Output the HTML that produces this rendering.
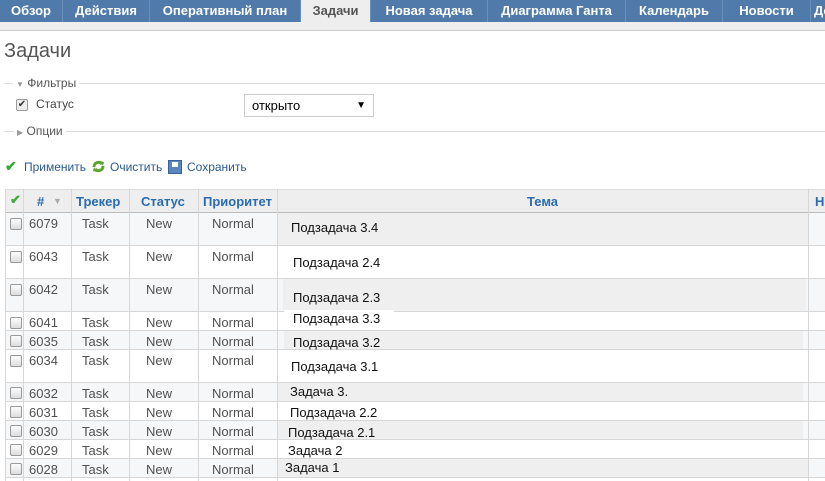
<!DOCTYPE html>
<html><head><meta charset="utf-8">
<style>
*{margin:0;padding:0;box-sizing:border-box}
body{width:825px;height:481px;overflow:hidden;background:#fff;font-family:"Liberation Sans",Arial,sans-serif;position:relative;color:#505050}
.a{position:absolute;white-space:nowrap}
.tab{position:absolute;top:0;height:22px;background:#507aaa;color:#fff;font-weight:bold;font-size:13px;line-height:22px;text-align:center}
.c{position:absolute;font-size:13px;color:#505050;margin-top:1px}
.t{position:absolute;font-size:13px;color:#111}
.cb{position:absolute;left:10px;width:12px;height:12px;border:1px solid #999;border-radius:2px;background:linear-gradient(#fdfdfd,#ddd)}
.vl{position:absolute;width:1px;background:#d7d7d7}
.hl{position:absolute;left:5px;width:820px;height:1px;background:#d7d7d7}
.th{position:absolute;top:194px;font-size:13px;font-weight:bold;color:#2a6bb0}
</style></head><body>
<div class="a" style="left:0;top:0;width:825px;height:22px;background:#6b8fbb"></div>
<div class="a" style="left:0;top:22px;width:825px;height:8px;background:#eee"></div>
<div class="a" style="left:0;top:30px;width:825px;height:1px;background:#ccc"></div>
<div class="tab" style="left:0;width:62px">Обзор</div>
<div class="tab" style="left:63px;width:86px">Действия</div>
<div class="tab" style="left:150px;width:150px">Оперативный план</div>
<div class="tab" style="left:301px;width:69px;background:#eee;color:#555;height:24px">Задачи</div>
<div class="tab" style="left:371px;width:116px">Новая задача</div>
<div class="tab" style="left:488px;width:137px">Диаграмма Ганта</div>
<div class="tab" style="left:626px;width:96px">Календарь</div>
<div class="tab" style="left:723px;width:87px">Новости</div>
<div class="tab" style="left:811px;width:30px;text-align:left;padding-left:3px">До</div>

<div class="a" style="left:4px;top:40px;font-size:20px;color:#555">Задачи</div>

<div class="a" style="left:4px;top:83px;width:821px;height:1px;background:#ddd"></div>
<div class="a" style="left:13px;top:76px;background:#fff;padding:0 3px;font-size:12px;color:#555"><span style="color:#999;font-size:8px">▼</span> Фильтры</div>
<div class="a" style="left:16px;top:99px;width:12px;height:12px;border:1px solid #999;border-radius:2px;background:#eee;font-size:10px;line-height:10px;color:#333;text-align:center">✔</div>
<div class="a" style="left:36px;top:97px;font-size:12px;color:#444">Статус</div>
<div class="a" style="left:244px;top:94px;width:130px;height:23px;border:1px solid #ccc;background:#fff;font-size:13px;color:#000;line-height:21px;padding-left:7px">открыто<span style="position:absolute;right:7px;font-size:10px">▼</span></div>
<div class="a" style="left:4px;top:131px;width:821px;height:1px;background:#ddd"></div>
<div class="a" style="left:14px;top:124px;background:#fff;padding:0 3px;font-size:12px;color:#555"><span style="color:#999;font-size:8px">▶</span> Опции</div>

<div class="a" style="left:5px;top:158px;font-size:14px;color:#3a3;font-weight:bold">✔</div>
<div class="a" style="left:24px;top:160px;font-size:12px;color:#2a5a8a">Применить</div>
<svg class="a" style="left:91px;top:159px" width="15" height="15" viewBox="0 0 15 15"><path d="M3 8a4.5 4.5 0 0 1 8-3" fill="none" stroke="#5aa52e" stroke-width="3"/><path d="M12 7a4.5 4.5 0 0 1-8 3" fill="none" stroke="#5aa52e" stroke-width="3"/><path d="M9 2l4 1-1 4z" fill="#5aa52e"/><path d="M6 13l-4-1 1-4z" fill="#5aa52e"/></svg>
<div class="a" style="left:110px;top:160px;font-size:12px;color:#2a5a8a">Очистить</div>
<div class="a" style="left:168px;top:160px;width:14px;height:14px;background:#5a86c0;border:1px solid #3a5f96"><div style="margin:1px 3px;width:6px;height:5px;background:#fff"></div></div>
<div class="a" style="left:187px;top:160px;font-size:12px;color:#2a5a8a">Сохранить</div>

<div class="a" style="left:5px;top:189px;width:820px;height:23px;background:#eee;border-top:1px solid #ddd"></div>
<div class="a" style="left:5px;top:212px;width:820px;height:1px;background:#bbb"></div>
<div class="a" style="left:10px;top:192px;font-size:13px;color:#4a4;font-weight:bold">✔</div>
<div class="th" style="left:37px">#</div><div class="a" style="left:53px;top:196px;font-size:9px;color:#aaa">▼</div>
<div class="th" style="left:76px">Трекер</div>
<div class="th" style="left:141px">Статус</div>
<div class="th" style="left:203px">Приоритет</div>
<div class="th" style="left:527px">Тема</div>
<div class="th" style="left:815px">Н</div>

<div class="a" style="left:5px;top:213px;width:820px;height:32px;background:#f6f7f9"></div>
<div class="a" style="left:277px;top:213px;width:531px;height:32px;background:#efefef"></div>
<div class="a" style="left:5px;top:279px;width:820px;height:32px;background:#f6f7f9"></div>
<div class="a" style="left:283px;top:279px;width:523px;height:32px;background:#efefef"></div>
<div class="a" style="left:5px;top:331px;width:820px;height:18px;background:#f6f7f9"></div>
<div class="a" style="left:284px;top:331px;width:519px;height:18px;background:#efefef"></div>
<div class="a" style="left:5px;top:383px;width:820px;height:18px;background:#f6f7f9"></div>
<div class="a" style="left:277px;top:383px;width:526px;height:18px;background:#efefef"></div>
<div class="a" style="left:5px;top:421px;width:820px;height:18px;background:#f6f7f9"></div>
<div class="a" style="left:277px;top:421px;width:526px;height:18px;background:#efefef"></div>
<div class="a" style="left:5px;top:459px;width:820px;height:18px;background:#f6f7f9"></div>
<div class="a" style="left:277px;top:459px;width:531px;height:18px;background:#efefef"></div>

<div class="hl" style="top:245px"></div><div class="hl" style="top:278px"></div><div class="hl" style="top:311px"></div><div class="hl" style="top:330px"></div><div class="hl" style="top:349px"></div><div class="hl" style="top:382px"></div><div class="hl" style="top:401px"></div><div class="hl" style="top:420px"></div><div class="hl" style="top:439px"></div><div class="hl" style="top:458px"></div><div class="hl" style="top:477px"></div>
<div class="vl" style="left:5px;top:189px;height:292px"></div>
<div class="vl" style="left:23px;top:189px;height:292px"></div>
<div class="vl" style="left:71px;top:189px;height:292px"></div>
<div class="vl" style="left:129px;top:189px;height:292px"></div>
<div class="vl" style="left:198px;top:189px;height:292px"></div>
<div class="vl" style="left:277px;top:189px;height:292px"></div>
<div class="vl" style="left:808px;top:189px;height:292px"></div>

<div class="cb" style="top:218px"></div><div class="c" style="left:29px;top:215px">6079</div><div class="c" style="left:82px;top:215px">Task</div><div class="c" style="left:146px;top:215px">New</div><div class="c" style="left:212px;top:215px">Normal</div><div class="t" style="left:291px;top:220px">Подзадача 3.4</div>
<div class="cb" style="top:251px"></div><div class="c" style="left:29px;top:248px">6043</div><div class="c" style="left:82px;top:248px">Task</div><div class="c" style="left:146px;top:248px">New</div><div class="c" style="left:212px;top:248px">Normal</div><div class="t" style="left:293px;top:255px">Подзадача 2.4</div>
<div class="cb" style="top:284px"></div><div class="c" style="left:29px;top:281px">6042</div><div class="c" style="left:82px;top:281px">Task</div><div class="c" style="left:146px;top:281px">New</div><div class="c" style="left:212px;top:281px">Normal</div><div class="t" style="left:293px;top:290px">Подзадача 2.3</div>
<div class="a" style="left:284px;top:310px;width:110px;height:3px;background:#fff"></div>
<div class="cb" style="top:317px"></div><div class="c" style="left:29px;top:314px">6041</div><div class="c" style="left:82px;top:314px">Task</div><div class="c" style="left:146px;top:314px">New</div><div class="c" style="left:212px;top:314px">Normal</div><div class="t" style="left:293px;top:311px">Подзадача 3.3</div>
<div class="cb" style="top:335px"></div><div class="c" style="left:29px;top:333px">6035</div><div class="c" style="left:82px;top:333px">Task</div><div class="c" style="left:146px;top:333px">New</div><div class="c" style="left:212px;top:333px">Normal</div><div class="t" style="left:293px;top:335px">Подзадача 3.2</div>
<div class="cb" style="top:355px"></div><div class="c" style="left:29px;top:352px">6034</div><div class="c" style="left:82px;top:352px">Task</div><div class="c" style="left:146px;top:352px">New</div><div class="c" style="left:212px;top:352px">Normal</div><div class="t" style="left:291px;top:359px">Подзадача 3.1</div>
<div class="cb" style="top:387px"></div><div class="c" style="left:29px;top:385px">6032</div><div class="c" style="left:82px;top:385px">Task</div><div class="c" style="left:146px;top:385px">New</div><div class="c" style="left:212px;top:385px">Normal</div><div class="t" style="left:290px;top:384px">Задача 3.</div>
<div class="cb" style="top:406px"></div><div class="c" style="left:29px;top:404px">6031</div><div class="c" style="left:82px;top:404px">Task</div><div class="c" style="left:146px;top:404px">New</div><div class="c" style="left:212px;top:404px">Normal</div><div class="t" style="left:290px;top:405px">Подзадача 2.2</div>
<div class="cb" style="top:425px"></div><div class="c" style="left:29px;top:423px">6030</div><div class="c" style="left:82px;top:423px">Task</div><div class="c" style="left:146px;top:423px">New</div><div class="c" style="left:212px;top:423px">Normal</div><div class="t" style="left:288px;top:425px">Подзадача 2.1</div>
<div class="cb" style="top:444px"></div><div class="c" style="left:29px;top:442px">6029</div><div class="c" style="left:82px;top:442px">Task</div><div class="c" style="left:146px;top:442px">New</div><div class="c" style="left:212px;top:442px">Normal</div><div class="t" style="left:288px;top:443px">Задача 2</div>
<div class="cb" style="top:463px"></div><div class="c" style="left:29px;top:461px">6028</div><div class="c" style="left:82px;top:461px">Task</div><div class="c" style="left:146px;top:461px">New</div><div class="c" style="left:212px;top:461px">Normal</div><div class="t" style="left:285px;top:460px">Задача 1</div>
</body></html>
